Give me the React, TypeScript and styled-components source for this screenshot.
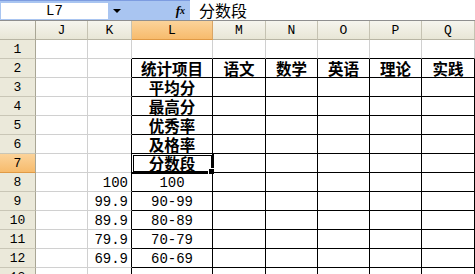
import React from "react";
import styled, { createGlobalStyle, css } from "styled-components";

const GlobalStyle = createGlobalStyle`
  html, body {
    margin: 0;
    padding: 0;
    background: #ffffff;
    overflow: hidden;
  }
  body {
    font-family: "Liberation Mono", "Noto Sans CJK SC", monospace;
  }
`;

const Root = styled.div`
  width: 475px;
  height: 274px;
  overflow: hidden;
  display: flex;
  flex-direction: column;
`;

const TopBar = styled.div`
  display: flex;
  flex-direction: row;
  align-items: stretch;
  height: 23px;
  box-sizing: border-box;
  background: #a9c5f1;
  border-top: 1px solid #7d9ce0;
  border-bottom: 1px solid #8f8f8f;
`;

const NameBox = styled.div`
  width: 107px;
  margin: 2px 0 1px 1px;
  background: #ffffff;
  display: flex;
  align-items: center;
  justify-content: center;
  font-size: 14px;
  color: #000;
`;

const DropButton = styled.div`
  width: 18px;
  display: flex;
  align-items: center;
  justify-content: center;

  &::after {
    content: "";
    border-left: 4px solid transparent;
    border-right: 4px solid transparent;
    border-top: 4px solid #000;
  }
`;

const FxLabel = styled.div`
  flex: 1;
  display: flex;
  align-items: center;
  justify-content: flex-end;
  padding-right: 5px;
  font-family: "Liberation Serif", serif;
  font-style: italic;
  font-weight: bold;
  font-size: 13px;
  color: #000;

  span {
    font-size: 10px;
  }
`;

const FormulaInput = styled.div`
  width: 285px;
  margin-top: -1px;
  background: #ffffff;
  display: flex;
  align-items: center;
  padding-left: 9px;
  box-sizing: border-box;
  font-family: "Noto Sans CJK SC", sans-serif;
  font-size: 16px;
  line-height: 1;
  color: #000;
`;

const Sheet = styled.div`
  display: grid;
  grid-template-columns: 36px 52px 44px 81px 53px 52px 52px 52px 53px;
  grid-template-rows: 19px repeat(13, 19px);
`;

const ColHeader = styled.div<{ $active?: boolean }>`
  box-sizing: border-box;
  border-right: 1px solid #c5c2b2;
  border-bottom: 1px solid #b8b5a4;
  background: linear-gradient(#f6f5ee, #e8e6d6);
  display: flex;
  align-items: center;
  justify-content: center;
  font-size: 13px;
  line-height: 1;
  color: #000;
  ${(p) =>
    p.$active &&
    css`
      background: linear-gradient(#fbd39a, #f7bb6c);
      border-bottom-color: #e09a45;
      border-right-color: #d9a565;
    `}
`;

const Corner = styled(ColHeader)`
  border-right-color: #a9a695;
`;

const RowHeader = styled.div<{ $active?: boolean }>`
  box-sizing: border-box;
  border-right: 1px solid #a9a695;
  border-bottom: 1px solid #c9c6b6;
  background: #ebe9da;
  display: flex;
  align-items: center;
  justify-content: center;
  font-size: 13px;
  line-height: 1;
  color: #000;
  ${(p) =>
    p.$active &&
    css`
      background: linear-gradient(#fbd39a, #f7bb6c);
      border-bottom-color: #e09a45;
    `}
`;

const Cell = styled.div<{
  $rightDark?: boolean;
  $bottomDark?: boolean;
  $align?: "left" | "center" | "right";
  $bold?: boolean;
}>`
  position: relative;
  box-sizing: border-box;
  border-right: 1px solid ${(p) => (p.$rightDark ? "#000" : "#d0d0d0")};
  border-bottom: 1px solid ${(p) => (p.$bottomDark ? "#000" : "#d0d0d0")};
  display: flex;
  align-items: center;
  justify-content: ${(p) =>
    p.$align === "right" ? "flex-end" : p.$align === "center" ? "center" : "flex-start"};
  padding: 1px 3px 0 3px;
  font-size: 14px;
  line-height: 1;
  white-space: nowrap;
  color: #000;
  ${(p) =>
    p.$bold &&
    css`
      font-family: "Noto Sans CJK SC", sans-serif;
      font-weight: 700;
      font-size: 15.5px;
    `}
`;

const ActiveFrame = styled.div`
  position: absolute;
  top: -1px;
  left: -1px;
  right: -2px;
  bottom: -2px;
  border: 3px double #000;
  pointer-events: none;
`;

const FillHandle = styled.div`
  position: absolute;
  right: -4px;
  bottom: -4px;
  width: 5px;
  height: 5px;
  background: #000;
  border: 1px solid #fff;
`;

const columns = ["J", "K", "L", "M", "N", "O", "P", "Q"];

const subjects = ["统计项目", "语文", "数学", "英语", "理论", "实践"];
const statNames = ["平均分", "最高分", "优秀率", "及格率", "分数段"];
const thresholds = ["100", "99.9", "89.9", "79.9", "69.9"];
const bands = ["100", "90-99", "80-89", "70-79", "60-69"];

type CellData = { text?: string; bold?: boolean; align?: "left" | "center" | "right" };

const getCell = (row: number, col: number): CellData => {
  if (row === 2 && col >= 2) return { text: subjects[col - 2], bold: true, align: "center" };
  if (row >= 3 && row <= 7 && col === 2) return { text: statNames[row - 3], bold: true, align: "center" };
  if (row >= 8 && row <= 12 && col === 1) return { text: thresholds[row - 8], align: "right" };
  if (row >= 8 && row <= 12 && col === 2) return { text: bands[row - 8], align: "center" };
  return {};
};

const App = () => {
  const rows = Array.from({ length: 13 }, (_, i) => i + 1);

  return (
    <Root>
      <GlobalStyle />
      <TopBar>
        <NameBox>L7</NameBox>
        <DropButton />
        <FxLabel>
          f<span>x</span>
        </FxLabel>
        <FormulaInput>分数段</FormulaInput>
      </TopBar>
      <Sheet>
        <Corner />
        {columns.map((c) => (
          <ColHeader key={c} $active={c === "L"}>
            {c}
          </ColHeader>
        ))}
        {rows.map((r) => (
          <React.Fragment key={r}>
            <RowHeader $active={r === 7}>{r}</RowHeader>
            {columns.map((c, ci) => {
              const data = getCell(r, ci);
              const inTable = r >= 2 && ci >= 2;
              return (
                <Cell
                  key={c}
                  $rightDark={inTable || (ci === 1 && r >= 2)}
                  $bottomDark={inTable || (r === 1 && ci >= 2)}
                  $align={data.align}
                  $bold={data.bold}
                >
                  {data.text}
                  {r === 7 && c === "L" && (
                    <ActiveFrame>
                      <FillHandle />
                    </ActiveFrame>
                  )}
                </Cell>
              );
            })}
          </React.Fragment>
        ))}
      </Sheet>
    </Root>
  );
};

export default App;
